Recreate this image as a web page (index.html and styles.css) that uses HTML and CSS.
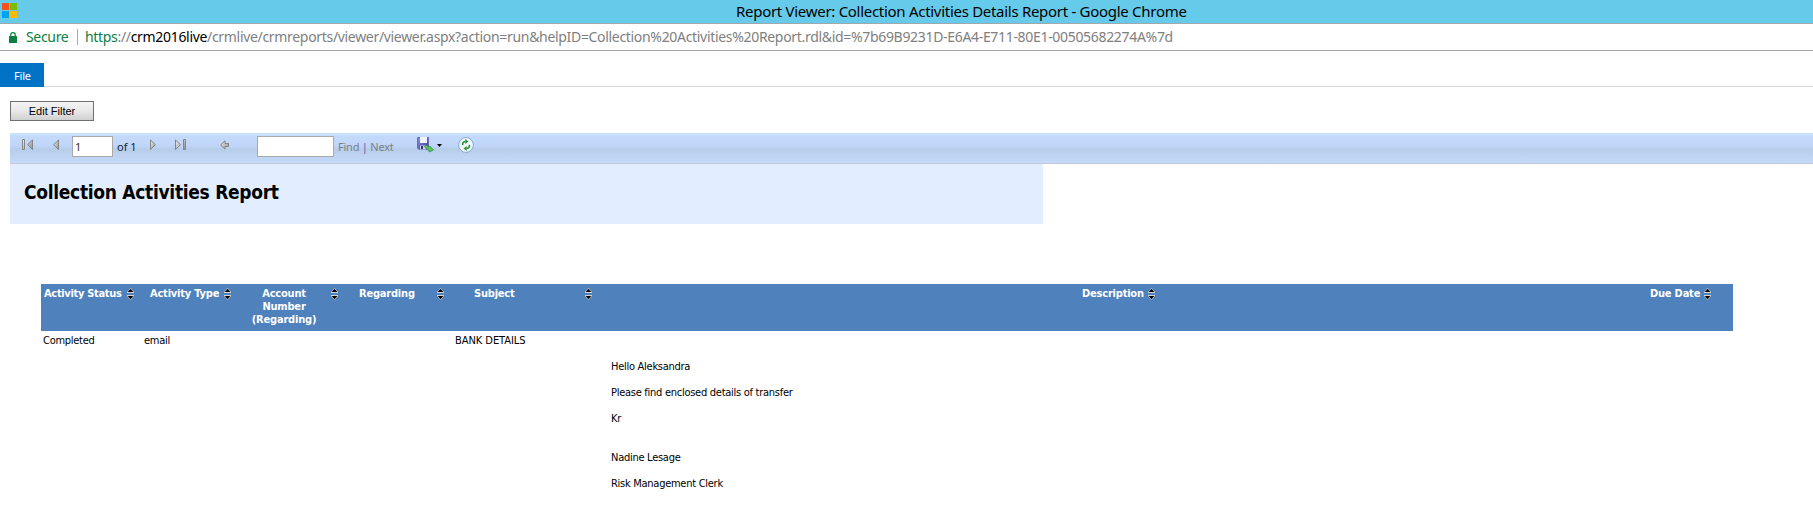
FILE: index.html
```html
<!DOCTYPE html>
<html lang="en">
<head>
<meta charset="utf-8">
<title>Report Viewer: Collection Activities Details Report</title>
<link rel="stylesheet" href="styles.css">
</head>
<body>
<svg width="0" height="0" class="defs">
  <defs>
    <linearGradient id="metal" x1="0" y1="0" x2="1" y2="1"><stop offset="0" stop-color="#f4f4f4"/><stop offset="1" stop-color="#8c8c8c"/></linearGradient>
    <linearGradient id="disk" x1="0" y1="0" x2="1" y2="1"><stop offset="0" stop-color="#8f8fe0"/><stop offset="1" stop-color="#3a3a98"/></linearGradient>
    <symbol id="sort" viewBox="0 0 7 12">
      <path d="M3.5 0L7 4v1H0V4z" fill="#d6d2cc"/><path d="M3.5 .7L6.300 4H.7z" fill="#000"/>
      <path d="M3.5 12L7 8V7H0v1z" fill="#d6d2cc"/><path d="M3.5 11.300L6.300 8H.7z" fill="#000"/>
    </symbol>
  </defs>
</svg>
<header class="titlebar">
  <svg class="logo" width="15" height="15" viewBox="0 0 15 15"><path fill="#f8501e" d="M0 0h7v7H0z"/><path fill="#7fba00" d="M8 0h7v7H8z"/><path fill="#00a3f0" d="M0 8h7v7H0z"/><path fill="#ffb901" d="M8 8h7v7H8z"/></svg>
  <div class="window-title">Report Viewer: Collection Activities Details Report - Google Chrome</div>
</header>
<div class="address">
  <svg class="lock" width="8" height="11" viewBox="0 0 8 11"><path d="M1.7 5V3a2.3 2.3 0 0 1 4.6 0v2" fill="none" stroke="#0b8043" stroke-width="1.2"/><rect y="4" width="8" height="7" rx=".6" fill="#0b8043"/></svg>
  <span class="secure">Secure</span>
  <span class="separator"></span>
  <span class="url"><span class="scheme">https</span>://<span class="host">crm2016live</span>/crmlive/crmreports/viewer/viewer.aspx?action=run&amp;helpID=Collection%20Activities%20Report.rdl&amp;id=%7b69B9231D-E6A4-E711-80E1-00505682274A%7d</span>
</div>
<nav class="ribbon"><div class="file-tab">File</div></nav>
<main class="content">
  <button class="edit-filter">Edit Filter</button>
  <div class="toolbar">
    <svg class="first" width="11" height="12" viewBox="0 0 11 12" fill="url(#metal)" stroke="#858585"><path d="M.5.5h2v10h-2zM10.5 1v9.5L5.5 5.7z"/></svg>
    <svg class="prev" width="6" height="12" viewBox="0 0 6 12" fill="url(#metal)" stroke="#858585"><path d="M5.5 1v9.5L.6 5.7z"/></svg>
    <input class="page" value="1">
    <span class="of">of 1</span>
    <svg class="next" width="6" height="12" viewBox="0 0 6 12" fill="url(#metal)" stroke="#858585"><path d="M.5 1v9.5l4.9-4.8z"/></svg>
    <svg class="last" width="11" height="12" viewBox="0 0 11 12" fill="url(#metal)" stroke="#858585"><path d="M8.500.5h2v10h-2zM.5 1v9.5l5-4.800z"/></svg>
    <svg class="back" width="9" height="10" viewBox="0 0 9 10" fill="url(#metal)" stroke="#858585"><path d="M.6 5L5 .8v2.700h3.500v3H5v2.700z"/></svg>
    <input class="search">
    <span class="find">Find <i class="bar">|</i> Next</span>
    <svg class="export" width="17" height="16" viewBox="0 0 17 16"><path d="M.5.5h11v12H2l-1.500-1.500z" fill="url(#disk)" stroke="#6a6ac4"/><path d="M3 0h7v6H3z" fill="#eef2ff"/><path d="M3 8.500h6v4H3z" fill="#cfd3ea"/><path d="M4 9h2v3H4z" fill="#333377"/><path d="M7.500 9.500l2-1.300 2.500 2 .8-1.200 3.700 4-4.500 2 .3-1.500c-2-.5-3.500-2-4.800-4z" fill="#5cc45f" stroke="#2e8b3b" stroke-width=".7"/></svg>
    <svg class="caret" width="5" height="3" viewBox="0 0 5 3"><path d="M0 0h5L2.500 3z"/></svg>
    <svg class="refresh" width="16" height="16" viewBox="0 0 16 16"><circle cx="8" cy="8" r="7.400" fill="#eef6ff" stroke="#86a6d0"/><path d="M4.700 8.200C4.300 5.700 5.500 4.500 7.500 4.500M11.300 7.800c.4 2.500-.8 3.700-2.800 3.700" fill="none" stroke="#27972b" stroke-width="1.600"/><path d="M7.300 2v5L10.500 4.500zM8.700 14V9L5.500 11.500z" fill="#27972b"/></svg>
  </div>
  <section class="report-head"><h1>Collection Activities Report</h1></section>
  <section class="table">
    <div class="row head">
      <div class="cell status"><span class="label">Activity Status</span><svg class="sort"><use href="#sort"/></svg></div>
      <div class="cell type"><span class="label">Activity Type</span><svg class="sort"><use href="#sort"/></svg></div>
      <div class="cell account"><span class="label">Account Number (Regarding)</span><svg class="sort"><use href="#sort"/></svg></div>
      <div class="cell regarding"><span class="label">Regarding</span><svg class="sort"><use href="#sort"/></svg></div>
      <div class="cell subject"><span class="label">Subject</span><svg class="sort"><use href="#sort"/></svg></div>
      <div class="cell description"><span class="label">Description</span><svg class="sort"><use href="#sort"/></svg></div>
      <div class="cell due"><span class="label">Due Date</span><svg class="sort"><use href="#sort"/></svg></div>
    </div>
    <div class="row data">
      <div>Completed</div><div>email</div><div></div><div></div><div class="caps">BANK DETAILS</div>
      <div class="message"><p>Hello Aleksandra</p><p>Please find enclosed details of transfer</p><p>Kr</p><p class="sign">Nadine Lesage</p><p>Risk Management Clerk</p></div>
    </div>
  </section>
</main>
</body>
</html>
```
FILE: styles.css
```css
* { box-sizing: border-box; }
body { margin: 0; height: 531px; overflow: hidden; background: #fff; color: #000; font-family: "DejaVu Sans Condensed", "DejaVu Sans", sans-serif; font-size: 11px; }
svg { display: block; flex: none; }
.defs { position: absolute; }
.titlebar { display: flex; height: 24px; padding: 3px 0 0 2px; background: #66cbea; border-bottom: 1px solid #a0a8ac; }
.window-title { margin-left: 719px; margin-top: -1px; font: 15px/18px "Noto Sans", sans-serif; letter-spacing: -.29px; white-space: nowrap; }
.address { display: flex; align-items: center; height: 27px; padding-left: 9px; border-bottom: 1px solid #a6a6a6; font: 14px/26px "Noto Sans", sans-serif; letter-spacing: -.318px; white-space: nowrap; color: #808080; }
.secure { width: 51px; margin-left: 9px; color: #0b8043; }
.separator { width: 1px; height: 16px; background: #a9a9a9; }
.url { margin-left: 7px; }
.scheme { color: #0b8043; }
.host { color: #000; }
.ribbon { height: 36px; padding-top: 12px; border-bottom: 1px solid #d6d6d6; }
.file-tab { width: 44px; height: 24px; padding-left: 14px; background: #0072c6; color: #fff; font: 11px/26px "Noto Sans", sans-serif; letter-spacing: -.2px; }
.content { padding: 14px 0 0 10px; }
.edit-filter { display: block; width: 84px; height: 20px; padding: 0; border: 1px solid #707070; background: linear-gradient(#f4f4f4, #e8e8e8 50%, #d0d0d0); font: 11px/18px "Liberation Sans", sans-serif; color: #000; }
.toolbar { display: flex; align-items: flex-start; height: 31px; margin-top: 12px; border-bottom: 1px solid #c4c8d0; background: linear-gradient(#cfe6ff 0, #c4dafb 3px, #bfd6fa 13px, #b6cde9 16px, #c5dafa 30px); font: 11px/14px "Noto Sans", sans-serif; }
.toolbar input { height: 21px; margin-top: 3px; padding: 0 2px 1px; border: 1px solid #a9a9a9; background: #fff; font: 11px/18px "Noto Sans", sans-serif; color: #333; }
.first { margin: 6px 0 0 12px; }
.prev { margin: 6px 0 0 20px; }
.toolbar .page { width: 41px; margin-left: 13px; }
.of { width: 20px; margin: 7px 0 0 4px; white-space: nowrap; color: #223; }
.next { margin: 6px 0 0 13px; }
.last { margin: 6px 0 0 19px; }
.back { margin: 7px 0 0 34px; }
.toolbar .search { width: 77px; margin-left: 28px; }
.find { width: 56px; margin: 7px 0 0 4px; letter-spacing: -.23px; white-space: nowrap; color: #7c7f86; }
.bar { font-style: normal; color: #5a62a8; }
.export { margin: 4px 0 0 23px; }
.caret { margin: 11px 0 0 3px; }
.refresh { margin: 4px 0 0 16px; }
.report-head { width: 1033px; height: 60px; padding: 16px 0 0 14px; background: #e2eeff; }
h1 { margin: 0; font-size: 19px; line-height: 25px; font-weight: bold; letter-spacing: -.3px; white-space: nowrap; }
.table { width: 1692px; margin: 60px 0 0 31px; }
.row { display: grid; grid-template-columns: 101px 97px 105px 109px 156px 984px 140px; }
.head { height: 47px; background: #4f81bd; color: #fff; font-weight: bold; line-height: 13px; letter-spacing: -.2px; }
.cell { display: flex; align-items: flex-start; padding-top: 3px; }
.label { flex: none; white-space: nowrap; }
.sort { width: 7px; height: 12px; margin-top: 1px; }
.status { padding-left: 3px; }
.status .label { width: 83px; letter-spacing: -.32px; }
.type { padding-left: 8px; }
.type .label { width: 74px; }
.account { padding-left: 10px; }
.account .label { width: 70px; margin-right: 12px; white-space: normal; text-align: center; }
.regarding { padding-left: 15px; }
.regarding .label { width: 78px; }
.subject { padding-left: 21px; }
.subject .label { width: 111px; }
.description { padding-left: 473px; }
.description .label { width: 66px; }
.due { padding-left: 57px; }
.due .label { width: 54px; }
.data { padding-top: 3px; line-height: 13px; letter-spacing: -.27px; white-space: nowrap; }
.data > div { padding-left: 2px; }
.data .caps { letter-spacing: -.05px; }
.message { padding-top: 26px; }
p { margin: 0 0 13px; }
.message .sign { margin-top: 26px; }
```
